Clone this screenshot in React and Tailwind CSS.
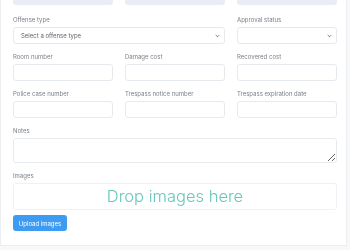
const Label = ({ children }) => (
  <div className="text-[6px] leading-[10px] mb-[2px] text-[#7b8089]">{children}</div>
);

const Input = () => (
  <div className="h-[17px] rounded-[3px] border border-[#e6e9ee] bg-white" />
);

const Chevron = () => (
  <svg width="5" height="4" viewBox="0 0 5 4" className="text-[#6a6f76]">
    <path d="M0.7 1 L2.5 2.8 L4.3 1" fill="none" stroke="currentColor" strokeWidth="0.9" />
  </svg>
);

const Select = ({ placeholder }) => (
  <div className="h-[17px] rounded-[3px] border border-[#e6e9ee] bg-white flex items-center justify-between pl-[7px] pr-[4px]">
    <span className="text-[6px] text-[#5f646b]">{placeholder}</span>
    <Chevron />
  </div>
);

const Field = ({ label, children }) => (
  <div>
    <Label>{label}</Label>
    {children || <Input />}
  </div>
);

export default function App() {
  return (
    <div className="w-[350px] h-[250px] overflow-hidden bg-[#f7f8fa]" style={{ fontFamily: 'Inter, "Noto Sans", sans-serif' }}>
      <div className="w-[347px] -mt-[12px] bg-white border-r border-b border-l border-[#eceef1] pl-3 pr-[9px] pb-[14px]">
        <div className="grid grid-cols-3 gap-x-3">
          <div className="h-[17px] rounded-[3px] bg-[#e9eef4]" />
          <div className="h-[17px] rounded-[3px] bg-[#e9eef4]" />
          <div className="h-[17px] rounded-[3px] bg-[#e9eef4]" />
        </div>

        <div className="grid grid-cols-3 gap-x-3 mt-[10px]">
          <div className="col-span-2">
            <Field label="Offense type">
              <Select placeholder="Select a offense type" />
            </Field>
          </div>
          <Field label="Approval status">
            <Select placeholder="" />
          </Field>
        </div>

        <div className="grid grid-cols-3 gap-x-3 mt-[8px]">
          <Field label="Room number" />
          <Field label="Damage cost" />
          <Field label="Recovered cost" />
        </div>

        <div className="grid grid-cols-3 gap-x-3 mt-[8px]">
          <Field label="Police case number" />
          <Field label="Trespass notice number" />
          <Field label="Trespass expiration date" />
        </div>

        <div className="mt-[8px]">
          <Label>Notes</Label>
          <textarea className="block w-full h-[25px] rounded-[3px] border border-[#e6e9ee] bg-white" />
        </div>

        <div className="mt-[8px]">
          <Label>Images</Label>
          <div className="h-[27px] rounded-[3px] border border-[#eff1f4] flex items-center justify-center">
            <span className="text-[16.5px] font-light text-[#67c8bc] leading-none">Drop images here</span>
          </div>
        </div>

        <button className="mt-[5px] h-[16px] w-[54px] rounded-[3px] bg-[#3d9cf2] text-white text-[6px] flex items-center justify-center">
          Upload images
        </button>
      </div>
    </div>
  );
}
